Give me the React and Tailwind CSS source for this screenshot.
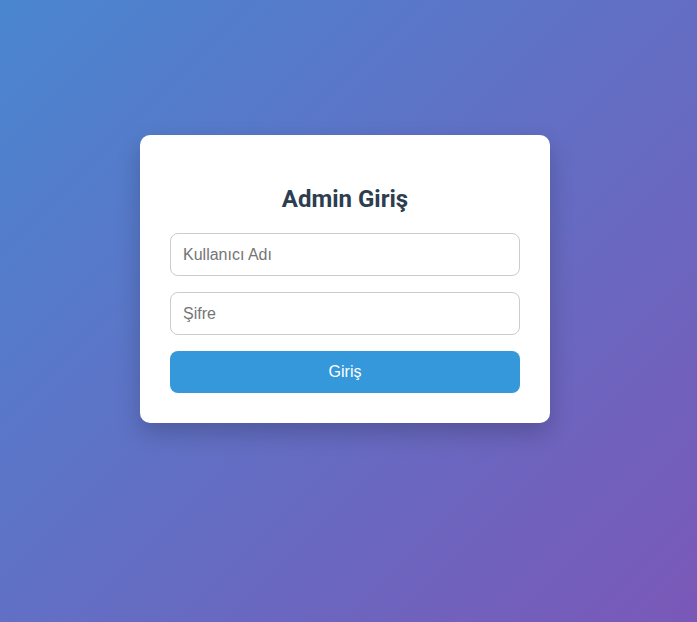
const Field = ({ placeholder, type = "text" }) => {
    return (
        <input
            type={type}
            placeholder={placeholder}
            className="block w-full h-[43px] px-3 rounded-lg border border-[#cccccc] bg-white text-base text-[#333] placeholder:text-[#757575] outline-none"
            style={{ fontFamily: '"Liberation Sans", Arial, sans-serif' }}
        />
    )
}

const App = () => {
    return (
        <div className="min-h-screen w-full bg-[linear-gradient(135deg,#4a86d0,#7a58b8)] flex justify-center items-start pt-[135px] pr-[7px]">
            <div className="w-[410px] bg-white rounded-[10px] shadow-[0_10px_25px_rgba(0,0,0,0.2)] px-[30px] py-[30px]">
                <h2
                    className="mt-5 mb-5 h-[28px] leading-[28px] text-center text-2xl font-bold text-[#2c3e50]"
                    style={{ fontFamily: 'Roboto, "Liberation Sans", sans-serif' }}
                >
                    Admin Giriş
                </h2>
                <div className="flex flex-col gap-4">
                    <Field placeholder="Kullanıcı Adı" />
                    <Field placeholder="Şifre" type="password" />
                    <button
                        className="h-[42px] w-full rounded-lg bg-[#3498db] text-white text-base"
                        style={{ fontFamily: '"Liberation Sans", Arial, sans-serif' }}
                    >
                        Giriş
                    </button>
                </div>
            </div>
        </div>
    )
}

export default App;
